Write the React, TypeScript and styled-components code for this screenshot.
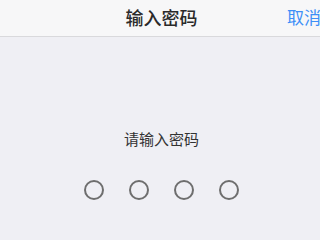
import React from "react";
import styled, { createGlobalStyle } from "styled-components";

const Global = createGlobalStyle`
  html, body { margin: 0; padding: 0; background: #efeff4; }
  body { font-family: "Noto Sans CJK SC", "Noto Sans", sans-serif; }
`;

const Page = styled.div`
  width: 320px;
  height: 240px;
  overflow: hidden;
  background: #efeff4;
  display: flex;
  flex-direction: column;
`;

const Header = styled.div`
  height: 36px;
  flex: none;
  background: #f7f7f8;
  border-bottom: 1px solid #d9d9dc;
  display: grid;
  grid-template-columns: 1fr auto 1fr;
  align-items: center;
  padding-left: 3px;
`;

const Title = styled.div`
  grid-column: 2;
  font-size: 18px;
  font-weight: 500;
  color: #2a2a2a;
  line-height: 1;
  margin-top: -3px;
`;

const Cancel = styled.div`
  grid-column: 3;
  justify-self: end;
  font-size: 17px;
  color: #3d8ff7;
  line-height: 1;
  margin-right: -1px;
  margin-top: -3px;
  white-space: nowrap;
`;

const Body = styled.div`
  flex: 1;
  display: flex;
  flex-direction: column;
  align-items: center;
  padding-top: 94px;
  padding-left: 3px;
`;

const Prompt = styled.div`
  font-size: 15px;
  color: #333;
  line-height: 1;
`;

const Dots = styled.div`
  display: flex;
  gap: 25px;
  margin-top: 34px;
`;

const Dot = styled.div`
  width: 16px;
  height: 16px;
  border: 2px solid #6e6e6e;
  border-radius: 50%;
`;

export default function App() {
  return (
    <>
      <Global />
      <Page>
        <Header>
          <Title>输入密码</Title>
          <Cancel>取消</Cancel>
        </Header>
        <Body>
          <Prompt>请输入密码</Prompt>
          <Dots>
            {[0, 1, 2, 3].map((i) => (
              <Dot key={i} />
            ))}
          </Dots>
        </Body>
      </Page>
    </>
  );
}
